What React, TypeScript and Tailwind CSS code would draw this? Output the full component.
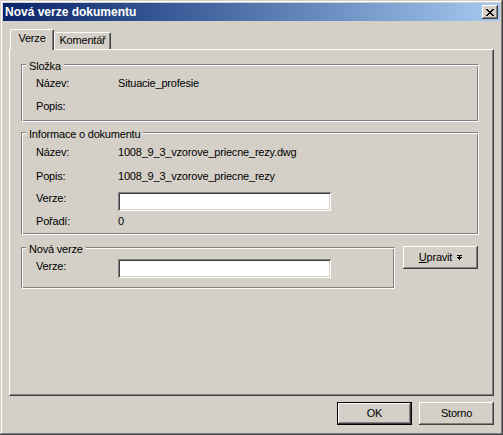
import React from "react";

const raised =
  "shadow-[inset_-1px_-1px_#404040,inset_1px_1px_#ffffff,inset_-2px_-2px_#808080,inset_2px_2px_#d4d0c8]";
const sunken =
  "shadow-[inset_1px_1px_#808080,inset_-1px_-1px_#ffffff,inset_2px_2px_#404040,inset_-2px_-2px_#d4d0c8]";
const etched =
  "border border-t-[#808080] border-l-[#808080] border-b-white border-r-white shadow-[inset_1px_1px_#ffffff,inset_-1px_-1px_#808080]";

function CloseGlyph() {
  const rows: [number, number][][] = [
    [[0, 2], [6, 2]],
    [[1, 2], [5, 2]],
    [[2, 4]],
    [[3, 2]],
    [[2, 4]],
    [[1, 2], [5, 2]],
    [[0, 2], [6, 2]],
  ];
  return (
    <svg width="8" height="7" viewBox="0 0 8 7" shapeRendering="crispEdges">
      {rows.map((r, y) =>
        r.map(([x, w], i) => <rect key={`${y}-${i}`} x={x} y={y} width={w} height={1} fill="#000" />)
      )}
    </svg>
  );
}

function DropGlyph() {
  return (
    <svg width="5" height="6" viewBox="0 0 5 6" shapeRendering="crispEdges">
      <rect x="0" y="0" width="5" height="1" fill="#000" />
      <rect x="0" y="2" width="5" height="1" fill="#000" />
      <rect x="1" y="3" width="3" height="1" fill="#000" />
      <rect x="2" y="4" width="1" height="1" fill="#000" />
      <rect x="2" y="1" width="1" height="1" fill="#000" />
    </svg>
  );
}

export default function App() {
  return (
    <div
      className={`w-[503px] h-[435px] bg-[#d4d0c8] p-[3px] flex flex-col font-['Liberation_Sans',Arial,sans-serif] text-[11px] leading-[13px] tracking-[-0.2px] text-black shadow-[inset_-1px_-1px_#404040,inset_1px_1px_#d4d0c8,inset_-2px_-2px_#808080,inset_2px_2px_#ffffff]`}
    >
      {/* Title bar */}
      <div className="h-[18px] shrink-0 flex items-center justify-between pl-[2px] pr-[2px] bg-linear-to-r from-[#0a246a] to-[#a6caf0]">
        <span className="text-white font-bold text-[12px] leading-[14px] tracking-normal">
          Nová verze dokumentu
        </span>
        <div className={`w-[16px] h-[14px] bg-[#d4d0c8] flex items-center justify-center ${raised}`}>
          <CloseGlyph />
        </div>
      </div>

      {/* Body */}
      <div className="flex-1 flex flex-col px-[6px]">
        {/* Tabs */}
        <div className="h-[29px] -mb-[1px] flex items-end relative z-10 shrink-0">
          <div className="ml-[1px] w-[44px] h-[21px] bg-[#d4d0c8] border-l border-t border-r border-l-white border-t-white border-r-[#404040] rounded-t-[2px] shadow-[inset_-1px_0_#808080] flex justify-center pt-[2px]">
            Verze
          </div>
          <div className="mb-[1px] w-[57px] h-[17px] bg-[#d4d0c8] border-l border-t border-r border-l-white border-t-white border-r-[#404040] rounded-t-[2px] shadow-[inset_-1px_0_#808080] flex justify-center pt-[1px]">
            Komentář
          </div>
        </div>

        {/* Tab sheet */}
        <div className="h-[347px] shrink-0 bg-[#d4d0c8] border border-t-white border-l-white border-r-[#404040] border-b-[#404040] shadow-[inset_-1px_-1px_#808080] pl-[11px] pr-[14px] pt-[14px] flex flex-col">
          {/* Složka */}
          <div className={`relative h-[58px] ${etched} pt-[12px] pl-[14px]`}>
            <span className="absolute top-[-5px] left-[4px] px-[3px] bg-[#d4d0c8]">Složka</span>
            <div className="flex">
              <div className="w-[82px] shrink-0">Název:</div>
              <div>Situacie_profesie</div>
            </div>
            <div className="flex mt-[10px]">
              <div className="w-[82px] shrink-0">Popis:</div>
              <div></div>
            </div>
          </div>

          {/* Informace o dokumentu */}
          <div className={`relative mt-[10px] h-[103px] ${etched} pt-[13px] pl-[14px]`}>
            <span className="absolute top-[-5px] left-[4px] px-[3px] bg-[#d4d0c8]">
              Informace o dokumentu
            </span>
            <div className="flex">
              <div className="w-[82px] shrink-0">Název:</div>
              <div>1008_9_3_vzorove_priecne_rezy.dwg</div>
            </div>
            <div className="flex mt-[11px]">
              <div className="w-[82px] shrink-0">Popis:</div>
              <div>1008_9_3_vzorove_priecne_rezy</div>
            </div>
            <div className="flex items-start mt-[9px]">
              <div className="w-[82px] shrink-0">Verze:</div>
              <div className={`w-[213px] h-[19px] bg-white ${sunken}`}></div>
            </div>
            <div className="flex mt-[4px]">
              <div className="w-[82px] shrink-0">Pořadí:</div>
              <div>0</div>
            </div>
          </div>

          {/* Nová verze + Upravit */}
          <div className="flex items-start mt-[12px]">
            <div className={`relative w-[374px] h-[42px] ${etched} pt-[11px] pl-[14px]`}>
              <span className="absolute top-[-5px] left-[4px] px-[3px] bg-[#d4d0c8]">Nová verze</span>
              <div className="flex items-start">
                <div className="w-[82px] shrink-0 mt-[1px]">Verze:</div>
                <div className={`w-[213px] h-[19px] bg-white ${sunken}`}></div>
              </div>
            </div>
            <div
              className={`ml-[8px] -mt-[1px] w-[75px] h-[23px] bg-[#d4d0c8] flex items-center justify-center gap-[5px] ${raised}`}
            >
              <span>
                <span className="underline">U</span>pravit
              </span>
              <DropGlyph />
            </div>
          </div>
        </div>

        {/* Bottom buttons */}
        <div className="mt-[6px] flex justify-end gap-[7px]">
          <div className="w-[75px] h-[23px] border border-black">
            <div className={`w-full h-full bg-[#d4d0c8] flex items-center justify-center ${raised}`}>OK</div>
          </div>
          <div className={`w-[75px] h-[23px] bg-[#d4d0c8] flex items-center justify-center ${raised}`}>
            Storno
          </div>
        </div>
      </div>
    </div>
  );
}
